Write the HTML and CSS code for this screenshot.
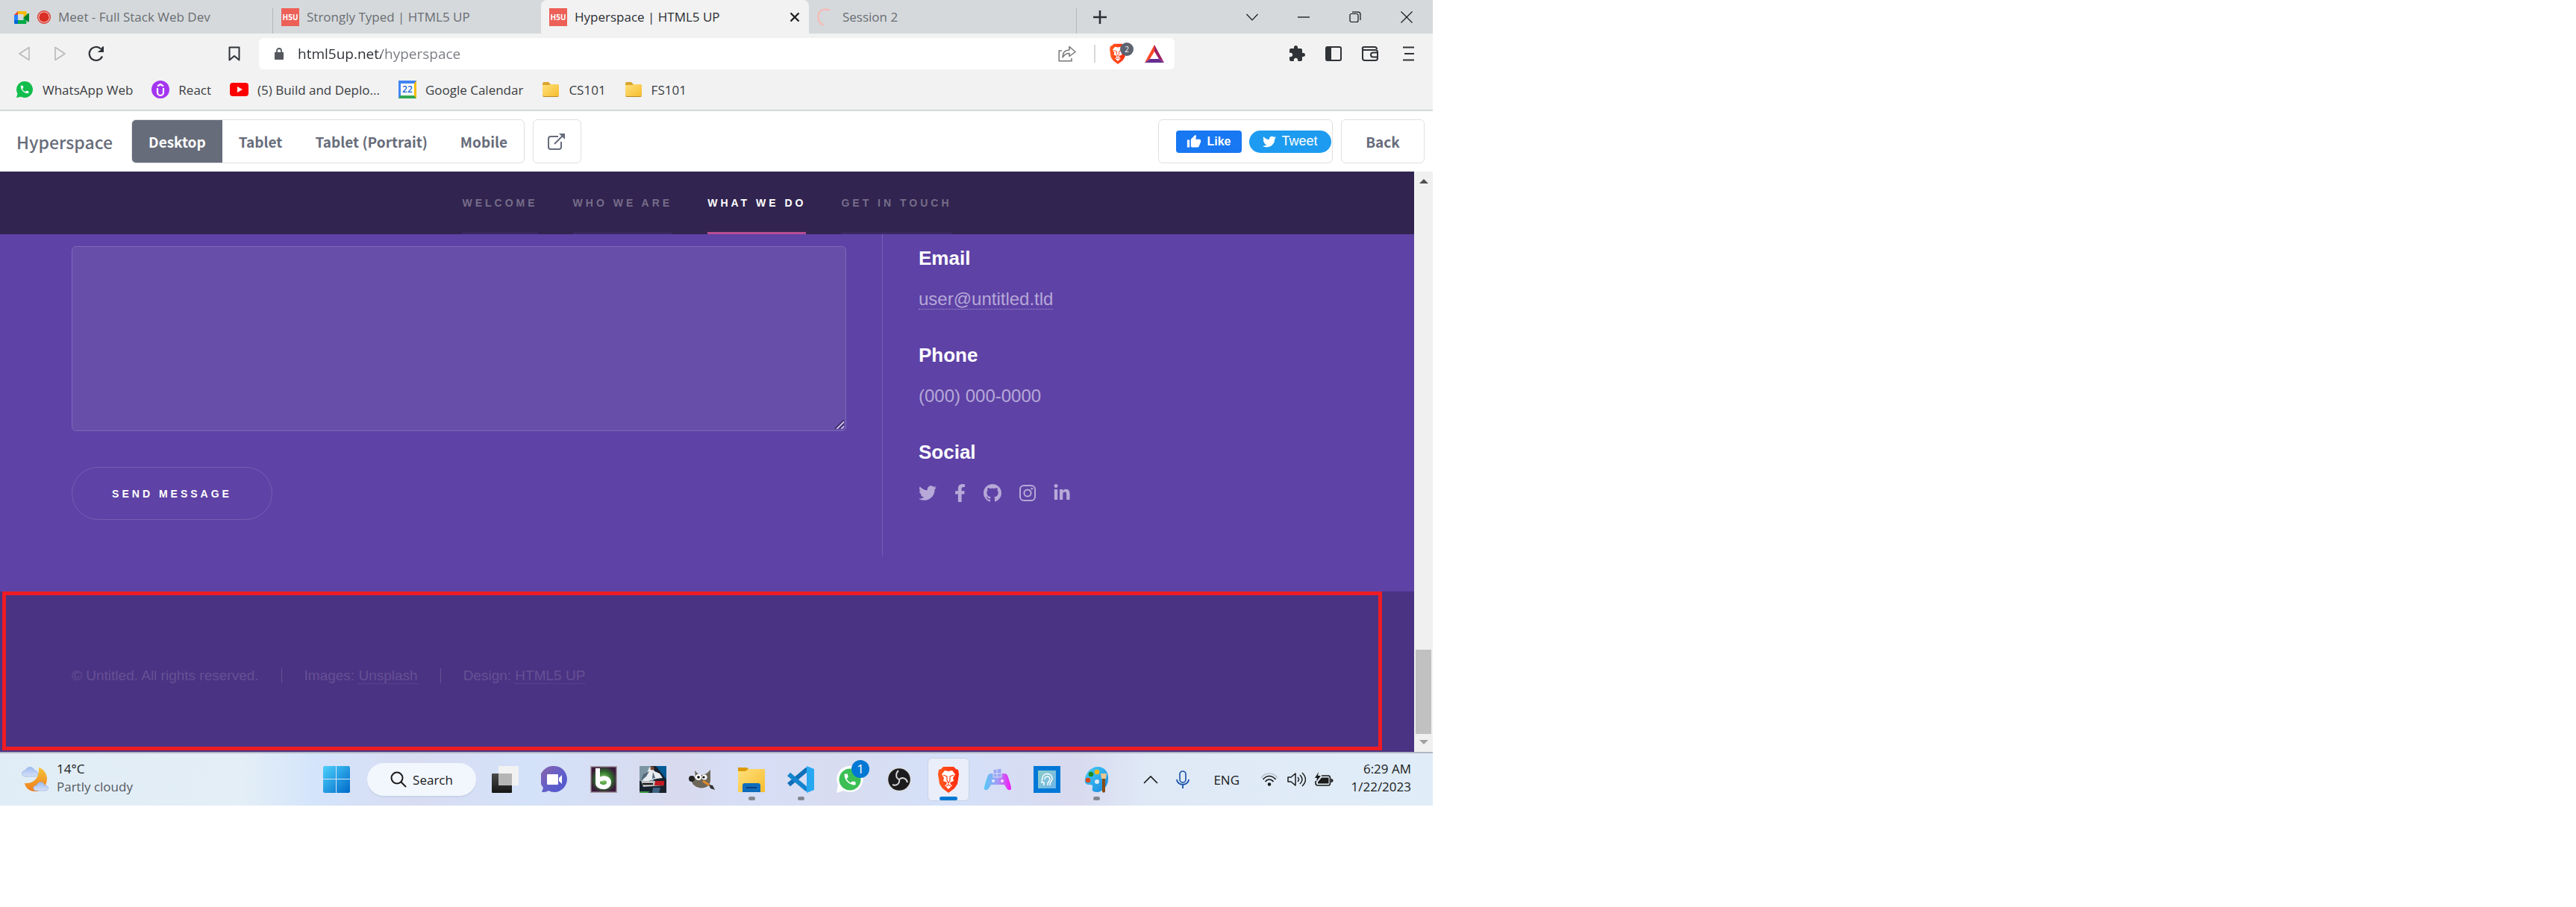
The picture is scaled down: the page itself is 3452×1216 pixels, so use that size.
FILE: index.html
```
<!DOCTYPE html>
<html lang="en">
<head>
<meta charset="utf-8">
<title>Hyperspace | HTML5 UP</title>
<link rel="stylesheet" href="styles.css">
</head>
<body>
<svg class="defs" aria-hidden="true">
  <defs>
    <linearGradient id="g-win" x1="0" y1="0" x2="1" y2="1"><stop offset="0" stop-color="#4cd0fb"/><stop offset="1" stop-color="#0069c9"/></linearGradient>
    <linearGradient id="g-folder" x1="0" y1="0" x2="1" y2="1"><stop offset="0" stop-color="#ffe07d"/><stop offset="1" stop-color="#f6bd2d"/></linearGradient>
    <linearGradient id="g-moon" x1="0" y1="0" x2="0" y2="1"><stop offset="0" stop-color="#f4c437"/><stop offset="1" stop-color="#f07c1e"/></linearGradient>
    <linearGradient id="g-cloud" x1="0" y1="0" x2="0" y2="1"><stop offset="0" stop-color="#9dbcf3"/><stop offset="1" stop-color="#d6e1f6"/></linearGradient>
    <linearGradient id="g-chat" x1="0" y1="0" x2="1" y2="1"><stop offset="0" stop-color="#8d63a8"/><stop offset=".5" stop-color="#6460c8"/><stop offset="1" stop-color="#4d56d0"/></linearGradient>
    <linearGradient id="g-brave" x1="0" y1="0" x2="1" y2="0"><stop offset="0" stop-color="#ff5a1f"/><stop offset="1" stop-color="#ff2a10"/></linearGradient>
    <linearGradient id="g-pad" x1="0" y1="0" x2="1" y2="0"><stop offset="0" stop-color="#55c8f8"/><stop offset=".5" stop-color="#a59bf5"/><stop offset="1" stop-color="#f616f6"/></linearGradient>
    <linearGradient id="g-palette" x1="0" y1="0" x2="1" y2="1"><stop offset="0" stop-color="#45d0f5"/><stop offset="1" stop-color="#1a86e0"/></linearGradient>
    <linearGradient id="g-head" x1="0" y1="0" x2="1" y2="1"><stop offset="0" stop-color="#8fcfc8"/><stop offset="1" stop-color="#6db3ea"/></linearGradient>
    <linearGradient id="g-dark" x1="0" y1="0" x2="0" y2="1"><stop offset="0" stop-color="#4a4a4a"/><stop offset="1" stop-color="#151515"/></linearGradient>
    <radialGradient id="g-glow"><stop offset="0" stop-color="#8fe070"/><stop offset=".6" stop-color="#2f6d2c"/><stop offset="1" stop-color="#3b1a3a"/></radialGradient>
  </defs>
  <symbol id="lion" viewBox="0 0 30 36">
    <path fill="url(#g-brave)" d="M8 1h14l3 3 3 1 1 6-2 13-4 6-8 6-8-6-4-6L1 11l1-6 3-1z"/>
    <path fill="#fff" d="M15 7l5-1 4 5-3 5 1 4-5 2 1 3 2 1-5 5-5-5 2-1 1-3-5-2 1-4-3-5 4-5z"/>
    <path fill="none" stroke="#ff3d15" stroke-width="1.2" d="M8 12l5 2v5l2 4 2-4v-5l5-2M12 27l3-2 3 2"/>
  </symbol>
  <symbol id="bird" viewBox="0 0 512 512"><path fill="currentColor" d="M459.37 151.716c.325 4.548.325 9.097.325 13.645 0 138.72-105.583 298.558-298.558 298.558-59.452 0-114.68-17.219-161.137-47.106 8.447.974 16.568 1.299 25.34 1.299 49.055 0 94.213-16.568 130.274-44.832-46.132-.975-84.792-31.188-98.112-72.772 6.498.974 12.995 1.624 19.818 1.624 9.421 0 18.843-1.3 27.614-3.573-48.081-9.747-84.143-51.98-84.143-102.985v-1.299c13.969 7.797 30.214 12.67 47.431 13.319-28.264-18.843-46.781-51.005-46.781-87.391 0-19.492 5.197-37.36 14.294-52.954 51.655 63.675 129.3 105.258 216.365 109.807-1.624-7.797-2.599-15.918-2.599-24.04 0-57.828 46.782-104.934 104.934-104.934 30.213 0 57.502 12.67 76.67 33.137 23.715-4.548 46.456-13.32 66.599-25.34-7.798 24.366-24.366 44.833-46.132 57.827 21.117-2.273 41.584-8.122 60.426-16.243-14.292 20.791-32.161 39.308-52.628 54.253z"/></symbol>
  <symbol id="call" viewBox="0 0 24 24"><path fill="#fff" d="M6.62 10.79c1.44 2.83 3.76 5.14 6.59 6.59l2.2-2.2c.27-.27.67-.36 1.02-.24 1.12.37 2.33.57 3.57.57.55 0 1 .45 1 1V20c0 .55-.45 1-1 1-9.39 0-17-7.61-17-17 0-.55.45-1 1-1h3.5c.55 0 1 .45 1 1 0 1.25.2 2.45.57 3.57.11.35.03.74-.25 1.02l-2.2 2.2z"/></symbol>
  <symbol id="folder" viewBox="0 0 24 24"><path fill="#d9a52b" d="M1 4c0-1 1-2 2-2h6l3 3h9c1 0 2 1 2 2v12H1z"/><path fill="url(#g-folder)" d="M1 6h9l2-1h9c1 0 2 1 2 2v12c0 1-1 2-2 2H3c-1 0-2-1-2-2z"/><path fill="#b88a24" d="M1 19c0 1 1 2 2 2h18c1 0 2-1 2-2v1c0 1-1 2-2 2H3c-1 0-2-1-2-2z"/></symbol>
</svg>

<div class="desktop">
  <header class="chrome">
    <div class="tabs">
      <div class="tab">
        <svg width="22" height="22" viewBox="0 0 22 22"><path fill="#fbbc04" d="M6 3h10c1 0 1.500 .5 1.500 1.500V9l-4 3V7H6z"/><path fill="#ea4335" d="M6 3v5H1z"/><path fill="#2684fc" d="M1 8h5v7H1z"/><path fill="#0066da" d="M1 15h5v5H2.500C1.500 20 1 19.500 1 18.500z"/><path fill="#00ac47" d="M6 15h7.500v-4l4 3v4.500c0 1-.5 1.500-1.500 1.500H6z"/><path fill="#00832d" d="M13.500 11.500l6-5.500c.7-.6 1.500-.2 1.500.6v10c0 .8-.8 1.200-1.500.6z"/></svg>
        <svg width="18" height="22" viewBox="0 0 18 22"><circle cx="9" cy="11" r="8.300" fill="#fff" stroke="#d93025" stroke-width="1.400"/><circle cx="9" cy="11" r="6.800" fill="#d93025"/></svg>
        <span>Meet - Full Stack Web Dev</span>
      </div>
      <div class="tab tab-plain"><span class="h5u">H5U</span><span>Strongly Typed | HTML5 UP</span></div>
      <div class="tab tab-active"><span class="h5u">H5U</span><span class="tab-name">Hyperspace | HTML5 UP</span>
        <button class="bare" aria-label="Close tab"><svg width="14" height="14" viewBox="0 0 14 14"><path stroke="#222" stroke-width="2.400" d="M1.500 1.500l11 11m0-11l-11 11"/></svg></button></div>
      <div class="tab"><svg width="24" height="24" viewBox="0 0 24 24"><path fill="none" stroke="#f4bcb8" stroke-width="2.500" d="M17 3C8-1 1 4 1.500 12c0 5 3 9 7 10.500"/></svg><span>Session 2</span></div>
      <button class="bare new-tab" aria-label="New tab"><svg width="18" height="18" viewBox="0 0 18 18"><path stroke="#2b2e33" stroke-width="2.500" d="M9 0v18M0 9h18"/></svg></button>
      <div class="window-buttons">
        <button class="bare" aria-label="Search tabs"><svg width="16" height="16" viewBox="0 0 16 16"><path fill="none" stroke="#111" stroke-width="1.100" d="M.5 4L8 12l7.500-8"/></svg></button>
        <button class="bare" aria-label="Minimize"><svg width="16" height="16" viewBox="0 0 16 16"><path stroke="#111" stroke-width="1.300" d="M0 8h16"/></svg></button>
        <button class="bare" aria-label="Restore"><svg width="16" height="16" viewBox="0 0 16 16"><rect x="1" y="3.500" width="11" height="11" rx="2" fill="none" stroke="#111" stroke-width="1.200"/><path fill="none" stroke="#111" stroke-width="1.200" d="M4 1.200h8c2 0 3 1 3 3V12"/></svg></button>
        <button class="bare" aria-label="Close"><svg width="16" height="16" viewBox="0 0 16 16"><path stroke="#111" stroke-width="1.100" d="M.5 .5l15 15m0-15l-15 15"/></svg></button>
      </div>
    </div>

    <div class="toolbar">
      <div class="history">
        <button class="bare" aria-label="Back"><svg width="18" height="20" viewBox="0 0 18 20"><path fill="none" stroke="#b9b9b9" stroke-width="1.600" stroke-linejoin="round" d="M15 1.500v17L2 10z"/></svg></button>
        <button class="bare" aria-label="Forward"><svg width="18" height="20" viewBox="0 0 18 20"><path fill="none" stroke="#b9b9b9" stroke-width="1.600" stroke-linejoin="round" d="M3 1.500v17L16 10z"/></svg></button>
        <button class="bare" aria-label="Reload"><svg width="22" height="22" viewBox="0 0 22 22"><path fill="none" stroke="#2f3237" stroke-width="2.200" d="M19 14.500A9 9 0 1 1 17 4.500"/><path fill="#2f3237" d="M21 1v8h-8c1-2 4-2 4-4 0-1 2-4 4-4z"/></svg></button>
        <button class="bare bookmark" aria-label="Bookmark this page"><svg width="16" height="20" viewBox="0 0 16 20"><path fill="none" stroke="#2f3237" stroke-width="2" stroke-linejoin="round" d="M1.500 1.500h13v17L8 13l-6.500 5.500z"/></svg></button>
      </div>
      <div class="address">
        <svg width="14" height="16" viewBox="0 0 14 16"><path fill="#55585d" d="M1 6h12v9c0 .6-.4 1-1 1H2c-.6 0-1-.4-1-1z"/><path fill="none" stroke="#55585d" stroke-width="1.800" d="M4 6.500V4a3 3 0 0 1 6 0v2.500"/></svg>
        <input class="url" type="text" aria-label="Address" value="html5up.net/hyperspace">
        <svg width="24" height="22" viewBox="0 0 24 22"><path fill="none" stroke="#777" stroke-width="1.500" d="M5 7H1.200v13.800H18V17"/><path fill="none" stroke="#777" stroke-width="1.500" stroke-linejoin="round" d="M6 16c0-6 3-10 9-10V1.500L23 8.500l-8 6V10.500c-4 0-7 2-9 5.500z"/></svg>
        <span class="rule"></span>
        <span class="shield"><svg width="24" height="28"><use href="#lion"/></svg><span class="shield-count">2</span></span>
        <svg width="26" height="24" viewBox="0 0 26 24"><path fill="#ff4724" d="M13 0v9L7 19 0 24z"/><path fill="#9e1f63" d="M13 0l13 24-7-5-6-10z"/><path fill="#662d91" d="M0 24l7-5h12l7 5z"/></svg>
      </div>
      <div class="actions">
        <button class="bare" aria-label="Extensions"><svg width="24" height="24" viewBox="0 0 24 24"><path fill="#2f3237" d="M20.500 11H19V7c0-1.100-.9-2-2-2h-4V3.500C13 2.120 11.880 1 10.500 1S8 2.120 8 3.500V5H4c-1.100 0-1.990.9-1.990 2v3.800H3.500c1.490 0 2.700 1.210 2.700 2.700s-1.210 2.700-2.700 2.700H2V20c0 1.100.9 2 2 2h3.800v-1.500c0-1.490 1.210-2.700 2.700-2.700 1.490 0 2.700 1.210 2.700 2.700V22H17c1.100 0 2-.9 2-2v-4h1.500c1.380 0 2.500-1.120 2.500-2.500S21.880 11 20.500 11z"/></svg></button>
        <button class="bare" aria-label="Sidebar"><svg width="22" height="20" viewBox="0 0 22 20"><rect x="1" y="1" width="20" height="18" rx="2" fill="none" stroke="#2f3237" stroke-width="2"/><path fill="#2f3237" d="M2 2h6v16H2z"/></svg></button>
        <button class="bare" aria-label="Wallet"><svg width="24" height="20" viewBox="0 0 24 20"><path fill="none" stroke="#2f3237" stroke-width="2" d="M2 3v13c0 1.500 1 3 3 3h14c2 0 3-1 3-3V8c0-2-1-3-3-3H4C1 5 1 1 4 1h14c2 0 3 1 3 3M22 8.500h-6c-4 0-4 6 0 6h6"/></svg></button>
        <button class="bare menu" aria-label="Menu"><svg width="16" height="20" viewBox="0 0 16 20"><path stroke="#2f3237" stroke-width="2" d="M0 1.500h15M2 10h13M0 18.500h15"/></svg></button>
      </div>
    </div>

    <nav class="bookmarks" aria-label="Bookmarks">
      <a href="#"><svg width="24" height="24" viewBox="0 0 24 24"><path fill="#12bd4c" d="M12 1a11 11 0 1 1-5 20.800L1 23l1.500-5.500A11 11 0 0 1 12 1z"/><use href="#call" x="5" y="5" width="14" height="14"/></svg>WhatsApp Web</a>
      <a href="#"><svg width="24" height="24" viewBox="0 0 24 24"><circle cx="12" cy="12" r="12" fill="#a435f0"/><path fill="none" stroke="#fff" stroke-width="2.200" d="M8 10v6a4 4 0 0 0 8 0v-6M8 7.500L12 5l4 2.500"/></svg>React</a>
      <a href="#"><svg width="25" height="18" viewBox="0 0 25 18"><rect width="25" height="18" rx="4" fill="#f00"/><path fill="#fff" d="M10 5l7 4-7 4z"/></svg>(5) Build and Deplo...</a>
      <a href="#"><span class="calendar">22</span>Google Calendar</a>
      <a href="#"><svg width="24" height="24"><use href="#folder"/></svg>CS101</a>
      <a href="#"><svg width="24" height="24"><use href="#folder"/></svg>FS101</a>
    </nav>
  </header>

  <section class="preview-bar">
    <h1>Hyperspace</h1>
    <div class="sizes">
      <button class="size size-active">Desktop</button>
      <button class="size">Tablet</button>
      <button class="size">Tablet (Portrait)</button>
      <button class="size">Mobile</button>
    </div>
    <button class="boxed open" aria-label="Open in new window"><svg width="24" height="22" viewBox="0 0 24 22"><path fill="none" stroke="#666c7a" stroke-width="2" d="M14 4H4C2 4 1 5 1 7v11c0 2 1 3 3 3h11c2 0 3-1 3-3v-7M9 14L21 2"/><path fill="#666c7a" d="M15 0h8v8z"/></svg></button>
    <div class="boxed share">
      <button class="like"><svg width="20" height="20" viewBox="0 0 24 24"><path fill="#fff" d="M1 21h4V9H1v12zm22-11c0-1.100-.9-2-2-2h-6.310l.95-4.570.03-.32c0-.41-.17-.79-.44-1.060L14.170 1 7.590 7.590C7.220 7.950 7 8.450 7 9v10c0 1.100.9 2 2 2h9c.83 0 1.540-.5 1.840-1.220l3.020-7.050c.09-.23.14-.47.14-.73v-2z"/></svg>Like</button>
      <button class="tweet"><svg width="18" height="18"><use href="#bird"/></svg>Tweet</button>
    </div>
    <button class="boxed back">Back</button>
  </section>

  <div class="viewport">
    <div class="page">
      <nav class="site-nav">
        <a href="#">Welcome</a><a href="#">Who we are</a><a href="#" class="current">What we do</a><a href="#">Get in touch</a>
      </nav>
      <main class="contact">
        <form class="message">
          <div class="field">
            <textarea aria-label="Message"></textarea>
            <svg class="grip" width="12" height="12" viewBox="0 0 12 12"><path stroke="#d3cae9" stroke-width="2" d="M2 12L12 2M8 12l4-4"/><path stroke="#2c1c50" stroke-width="1.300" d="M0 12L12 0M6 12l6-6"/></svg>
          </div>
          <button type="button" class="send">Send Message</button>
        </form>
        <section class="details">
          <div><h3>Email</h3><a href="#">user@untitled.tld</a></div>
          <div><h3>Phone</h3><span>(000) 000-0000</span></div>
          <div><h3>Social</h3>
            <div class="social">
              <svg width="24" height="24"><use href="#bird"/></svg>
              <svg width="15" height="24" viewBox="0 0 320 512"><path fill="currentColor" d="M279.140 288l14.220-92.660h-88.910v-60.130c0-25.350 12.420-50.060 52.240-50.060h40.420V6.260S260.430 0 225.360 0c-73.220 0-121.080 44.380-121.080 124.720v70.620H22.890V288h81.390v224h100.170V288z"/></svg>
              <svg width="24" height="24" viewBox="0 0 16 16"><path fill="currentColor" d="M8 0C3.580 0 0 3.580 0 8c0 3.540 2.290 6.530 5.470 7.590.4.07.55-.17.55-.38 0-.19-.01-.82-.01-1.490-2.010.37-2.530-.49-2.690-.94-.09-.23-.48-.94-.82-1.130-.28-.15-.68-.52-.01-.53.63-.01 1.080.58 1.230.82.72 1.210 1.870.87 2.330.66.07-.52.28-.87.51-1.070-1.780-.2-3.640-.89-3.640-3.950 0-.87.31-1.590.82-2.150-.08-.2-.36-1.020.08-2.120 0 0 .67-.21 2.200.82.64-.18 1.320-.27 2-.27.68 0 1.360.09 2 .27 1.530-1.040 2.200-.82 2.200-.82.44 1.100.16 1.920.08 2.120.51.56.82 1.270.82 2.150 0 3.070-1.870 3.750-3.650 3.950.29.25.54.73.54 1.480 0 1.070-.01 1.930-.01 2.200 0 .21.15.46.55.38A8.013 8.013 0 0016 8c0-4.420-3.580-8-8-8z"/></svg>
              <svg width="22" height="22" viewBox="0 0 22 22"><rect x="1" y="1" width="20" height="20" rx="5" fill="none" stroke="currentColor" stroke-width="2"/><circle cx="11" cy="11" r="4.600" fill="none" stroke="currentColor" stroke-width="2"/><circle cx="16.800" cy="5.200" r="1.400" fill="currentColor"/></svg>
              <svg width="22" height="24" viewBox="0 0 448 512"><path fill="currentColor" d="M100.280 448H7.400V148.900h92.880zM53.790 108.100C24.090 108.100 0 83.500 0 53.800a53.790 53.790 0 0 1 107.580 0c0 29.700-24.100 54.300-53.790 54.300zM447.900 448h-92.680V302.400c0-34.700-.7-79.200-48.290-79.200-48.290 0-55.690 37.700-55.690 76.700V448h-92.780V148.900h89.080v40.800h1.300c12.400-23.500 42.690-48.300 87.880-48.300 94 0 111.280 61.900 111.280 142.300V448z"/></svg>
            </div>
          </div>
        </section>
      </main>
      <footer class="site-footer">
        <ul>
          <li>© Untitled. All rights reserved.</li>
          <li>Images: <a href="#">Unsplash</a></li>
          <li>Design: <a href="#">HTML5 UP</a></li>
        </ul>
        <div class="marker"></div>
      </footer>
    </div>
    <div class="scrollbar"><span class="arrow-up"></span><span class="thumb"></span><span class="arrow-down"></span></div>
  </div>

  <footer class="taskbar">
    <div class="weather">
      <svg width="37" height="36" viewBox="0 0 37 36"><path fill="url(#g-moon)" d="M23 2c7 2 11 9 11 15 0 10-7 17-16 17C10 34 5 29 4 23c10 1 20-5 19-21z"/><path fill="url(#g-cloud)" stroke="#8fa8e0" stroke-width=".6" d="M4 14c-5-1-4-8 1-8 2-6 11-6 12 0 6 0 6 8 1 8z"/><path fill="url(#g-cloud)" stroke="#8fa8e0" stroke-width=".6" d="M19 33c-5-1-4-7 1-7 2-6 9-6 11 0 6 0 6 7 1 7z"/></svg>
      <p>14°C<span>Partly cloudy</span></p>
    </div>
    <div class="apps">
      <button class="app" aria-label="Start"><svg width="36" height="36" viewBox="0 0 36 36"><path fill="url(#g-win)" d="M2 0h15v17H0V2c0-1 1-2 2-2zM18 0h16c1 0 2 1 2 2v15H18zM0 18h17v18H2c-1 0-2-1-2-2zM18 18h18v16c0 1-1 2-2 2H18z"/></svg></button>
      <button class="search"><svg width="22" height="22" viewBox="0 0 22 22"><circle cx="9" cy="9" r="7.500" fill="none" stroke="#1a1a1a" stroke-width="2"/><path stroke="#1a1a1a" stroke-width="2" d="M14 14l7 7"/></svg>Search</button>
      <button class="app" aria-label="Task view"><svg width="36" height="36" viewBox="0 0 36 36"><rect y="10" width="27" height="26" rx="1" fill="url(#g-dark)"/><rect x="9" width="27" height="26" rx="1" fill="#f2f2f2"/><path fill="#b5b5b5" d="M9 10h18v16H9z"/></svg></button>
      <button class="app" aria-label="Chat"><svg width="36" height="36" viewBox="0 0 36 36"><path fill="url(#g-chat)" d="M18 0a17 17.500 0 1 1-8 33c-3 2-6 2-9 2l2-6A17.500 17.500 0 0 1 18 0z"/><rect x="8" y="11" width="15" height="14" rx="1" fill="#fff"/><path fill="#fff" d="M24 16l4-4v12l-4-4z"/></svg></button>
      <button class="app" aria-label="Bandicam"><svg width="36" height="36" viewBox="0 0 36 36"><rect width="36" height="36" fill="url(#g-glow)"/><rect x=".75" y=".75" width="34.500" height="34.500" fill="none" stroke="#aaa0a8" stroke-width="1.500"/><path fill="none" stroke="#fff" stroke-width="6" d="M10 3v20c0 6 15 8 15-1 0-7-9-7-13-3"/></svg></button>
      <button class="app" aria-label="PES 2013"><svg width="36" height="36" viewBox="0 0 36 36"><rect width="36" height="36" fill="#16222d"/><path fill="#7d96a3" d="M0 0h15l4 20H0z"/><path fill="#045b96" d="M22 0h14v18z"/><path fill="#e8edf0" d="M13 2l4-1 3 6 7 3 4 6-8 1-9 2-7 4-4-2 5-7z"/><path fill="#51697a" d="M5 11l8-4-4 7-7 5zM18 8l3 8-4 1z"/><circle cx="17" cy="3" r="2.500" fill="#7b4a33"/><path fill="#bcbcbc" d="M2 20h31v6L5 28z"/><path fill="#c21822" d="M21 20h12v6H20z"/><path stroke="#111" stroke-width="2" d="M4 24h14"/><path fill="#3b9d43" d="M0 34h14l-3 2H0z"/><path fill="#3f6282" d="M18 29h10l-2 7h-9z"/></svg></button>
      <button class="app" aria-label="GIMP"><svg width="36" height="36" viewBox="0 0 36 36"><path fill="#6d675a" d="M8 6l6 6c5 1 10-1 15-7v14c0 8-8 12-15 10-5-1-9-4-10-8l5-5z"/><circle cx="13" cy="15" r="4" fill="#fff"/><circle cx="21" cy="15" r="3.500" fill="#fff"/><circle cx="13" cy="15" r="1.800"/><circle cx="20" cy="15" r="1.600"/><circle cx="4" cy="17" r="4" fill="#222"/><path stroke="#e28a2b" stroke-width="3" d="M19 20l9 6"/><path fill="#333" d="M27 25l5 1 3 6-6-2z"/></svg></button>
      <button class="app running" aria-label="File Explorer"><svg width="36" height="36" viewBox="0 0 36 36"><path fill="#dd9b0b" d="M0 2h12l3 3v6H0z"/><path fill="url(#g-folder)" d="M0 7h10l4-3h22v31H0z"/><path fill="#0f6cbd" d="M6 35V26c0-2 1-3 3-3h18c2 0 3 1 3 3v9z"/><path stroke="#0a3e78" stroke-width="2" d="M11 29h14"/></svg></button>
      <button class="app running" aria-label="Visual Studio Code"><svg width="36" height="36" viewBox="0 0 36 36"><path fill="none" stroke="#0f70b8" stroke-width="6" d="M2 25L27 4"/><path fill="none" stroke="#1484cf" stroke-width="6" d="M2 11l25 21"/><path fill="#29a8f2" d="M26 0l10 4v28l-10 4z"/></svg></button>
      <button class="app" aria-label="WhatsApp"><svg width="36" height="36" viewBox="0 0 36 36"><path fill="#fff" d="M18 0a17.500 17.500 0 1 1-8 33L0 36l2-11A17.500 17.500 0 0 1 18 0z"/><circle cx="18" cy="18" r="14.500" fill="#3bbf55"/><use href="#call" x="8" y="8" width="20" height="20"/></svg><span class="count">1</span></button>
      <button class="app" aria-label="OBS"><svg width="36" height="36" viewBox="0 0 36 36"><circle cx="18" cy="18" r="15.500" fill="#1c1c1f" stroke="#ddd" stroke-width="1.500"/><path fill="none" stroke="#d5d5d5" stroke-width="2" d="M18 18c-5-2-5-8-1-12M18 18c5-4 10-1 11 4M18 18c1 6-4 9-9 7"/></svg></button>
      <button class="app app-active" aria-label="Brave"><svg width="30" height="36"><use href="#lion"/></svg></button>
      <button class="app" aria-label="Game controller"><svg width="36" height="36" viewBox="0 0 36 36"><path fill="url(#g-pad)" d="M4 15c1-4 3-5 6-5h16c3 0 5 1 6 5 2 6 4 12 4 15 0 3-4 3-6 0l-3-5H9l-3 5c-2 3-6 3-6 0 0-3 2-9 4-15z"/><path fill="#9aa6f6" stroke="#d8def3" d="M12 5l11-2v12H12zM17 4v11M12 10h11"/><circle cx="12" cy="20" r="2" fill="#e6ecff"/><circle cx="24" cy="20" r="2" fill="#ffe1ff"/></svg></button>
      <button class="app" aria-label="Assistant"><svg width="36" height="36" viewBox="0 0 36 36"><rect width="36" height="36" fill="#0078d7"/><rect x="6" y="6" width="24" height="24" fill="url(#g-head)"/><path fill="none" stroke="#fff" stroke-width="1.400" d="M14 26v-4h-3l1-6c1-8 13-7 13 1 0 3-2 4-3 6v3M15 18a3.500 3.500 0 1 1 6 2l-2 3v3"/></svg></button>
      <button class="app running" aria-label="Paint"><svg width="36" height="36" viewBox="0 0 36 36"><path fill="url(#g-palette)" d="M20 1c10 0 15 8 14 17 0 9-8 17-15 17-6 0-7-3-6-6 1-4-2-4-5-4-5 0-6-4-5-8C4 9 11 1 20 1z"/><circle cx="19" cy="8" r="3.300" fill="#f7b90c"/><circle cx="11" cy="11" r="3.300" fill="#1d8a20"/><circle cx="7" cy="19" r="3.300" fill="#d9481c"/><circle cx="19" cy="21" r="3" fill="#d9e9f8"/><path fill="#8a4b12" d="M26 16h4v18c0 2-4 2-4 0z"/><path fill="#e7c795" d="M24 10h8l-1 7h-6z"/></svg></button>
    </div>
    <div class="tray">
      <svg width="20" height="12" viewBox="0 0 20 12"><path fill="none" stroke="#1a1a1a" stroke-width="1.600" d="M1 11l9-9 9 9"/></svg>
      <svg width="18" height="24" viewBox="0 0 18 24"><rect x="5" y="1" width="8" height="15" rx="4" fill="none" stroke="#1650a8" stroke-width="1.600"/><path fill="none" stroke="#1650a8" stroke-width="1.800" d="M1 12c0 9 16 9 16 0M9 19v5"/></svg>
      <span class="lang">ENG</span>
      <div class="status">
        <svg width="24" height="18" viewBox="0 0 24 18"><path fill="none" stroke="#b9c2cc" stroke-width="1.600" d="M1 7C7-1 17-1 23 7"/><path fill="none" stroke="#1a1a1a" stroke-width="1.700" d="M3.500 9c5-6 12-6 17 0M6.500 12c3-4 8-4 11 0"/><circle cx="12" cy="15.500" r="2.200" fill="#1a1a1a"/></svg>
        <svg width="25" height="20" viewBox="0 0 25 20"><path fill="none" stroke="#1a1a1a" stroke-width="1.500" stroke-linejoin="round" d="M1 7h4l6-5v16l-6-5H1zM14 7c2 2 2 4 0 6M17 4c4 4 4 8 0 12M20 1c6 6 6 12 0 18"/></svg>
        <svg width="25" height="20" viewBox="0 0 25 20"><path fill="none" stroke="#1a1a1a" stroke-width="1.600" d="M9 5h9c2 0 2.500 1 2.500 3v7c0 2-1 3-2.500 3h-14c-2 0-3-1-3-3v-3"/><path fill="#1a1a1a" d="M9 7.500h9.500v8H4v-2zM21.500 9c4 0 4 5 0 5zM5 0L0 8h3l-1 5 6-8H4z"/></svg>
      </div>
      <p class="clock">6:29 AM<br>1/22/2023</p>
    </div>
  </footer>
</div>
</body>
</html>
```
FILE: styles.css
```
* { box-sizing: border-box; }

body {
  margin: 0;
  background: #fff;
  font-family: "Open Sans", "Noto Sans", sans-serif;
  font-size: 17px;
  color: #3a3d42;
}

h1, h3, p, ul { margin: 0; padding: 0; font-weight: inherit; }
button, input, textarea { font: inherit; color: inherit; }
a { color: inherit; text-decoration: none; }
svg { display: block; flex: none; }
.defs { position: absolute; width: 0; height: 0; }

.desktop { max-width: 1920px; }

.bare {
  display: flex;
  padding: 0;
  border: 0;
  background: none;
}

/* Browser chrome */
.chrome { background: #f2f2f2; border-bottom: 2px solid #d5d9dc; }

.tabs {
  display: flex;
  height: 45px;
  padding-left: 7px;
  background: #d5d9dc;
}

.tab {
  display: flex;
  align-items: center;
  flex: 0 1 359px;
  gap: 10px;
  padding-left: 11px;
  color: #6a6d72;
  white-space: nowrap;
  background: linear-gradient(#b4b8bc, #b4b8bc) right bottom / 1px 34px no-repeat;
}

.tab-plain { background: none; }

.tab-active {
  padding-right: 12px;
  color: #2b2e33;
  background: #f2f2f2;
  border-radius: 8px 8px 0 0;
}

.tab-name { flex: 1; }

.h5u {
  width: 24px;
  flex: none;
  background: #ec6057;
  color: #fff;
  font: bold 10px/24px "Open Sans", sans-serif;
  text-align: center;
}

.new-tab { align-items: center; margin-left: 22px; }

.window-buttons {
  display: flex;
  align-items: center;
  gap: 53px;
  margin-left: auto;
  padding-right: 27px;
}

.toolbar {
  display: flex;
  align-items: center;
  height: 54px;
}

.history {
  display: flex;
  align-items: center;
  gap: 29px;
  width: 347px;
  padding: 0 25px 0 24px;
}

.bookmark { margin-left: auto; }

.address {
  display: flex;
  align-items: center;
  flex: 0 1 1227px;
  gap: 18px;
  height: 42px;
  padding: 0 14px 0 20px;
  border-radius: 6px;
  background: #fff;
}

.url {
  flex: 1;
  min-width: 0;
  padding: 0;
  border: 0;
  outline: 0;
  font-size: 19px;
  color: #4a4d52;
  background: linear-gradient(90deg, #2b2e33 112px, #777a7f 112px);
  background-clip: text;
  -webkit-text-fill-color: transparent;
}

.rule { width: 2px; height: 24px; margin-left: 6px; background: #d8d8d8; }
.shield { position: relative; margin-right: 6px; }

.shield-count {
  position: absolute;
  top: -1px;
  left: 15px;
  width: 18px;
  border-radius: 9px;
  background: #5e6370;
  color: #fff;
  font-size: 10px;
  line-height: 18px;
  text-align: center;
}

.actions {
  display: flex;
  align-items: center;
  gap: 26px;
  margin-left: auto;
  padding-right: 24px;
}

.menu { margin-left: 6px; }

.bookmarks {
  display: flex;
  align-items: center;
  gap: 25px;
  height: 48px;
  padding: 0 21px 6px;
}

.bookmarks a { display: flex; align-items: center; gap: 12px; }

.calendar {
  width: 24px;
  height: 24px;
  border: solid #4285f4;
  border-width: 4px 3px;
  border-right-color: #fbbc04;
  border-bottom-color: #34a853;
  background: #fff;
  color: #1967d2;
  font-size: 12px;
  font-weight: 600;
  line-height: 16px;
  text-align: center;
}

/* Preview bar */
.preview-bar {
  display: flex;
  align-items: center;
  gap: 11px;
  height: 81px;
  padding: 0 11px 0 22px;
  font-family: "Noto Sans CJK SC", sans-serif;
  font-size: 19px;
  font-weight: 500;
  color: #666c7a;
}

.preview-bar h1 { margin-right: 14px; font-size: 23px; }

.sizes, .boxed {
  display: flex;
  align-items: center;
  height: 59px;
  border: 1px solid #dfe0e3;
  border-radius: 6px;
  background: #fff;
  overflow: hidden;
}

.size {
  align-self: stretch;
  padding: 0 22px;
  border: 0;
  background: none;
  font-weight: 700;
}

.size-active { background: #666c7a; color: #fff; }
.open { justify-content: center; width: 65px; }
.back { justify-content: center; width: 112px; font-weight: 700; }
.share { gap: 10px; width: 234px; margin-left: auto; padding-left: 23px; }

.like, .tweet {
  display: flex;
  align-items: center;
  justify-content: center;
  gap: 7px;
  flex: none;
  width: 88px;
  height: 30px;
  padding: 0;
  border: 0;
  border-radius: 4px;
  background: #1877f2;
  color: #fff;
  font: bold 16px "Liberation Sans", sans-serif;
}

.tweet { width: 110px; border-radius: 15px; background: #1d9bf0; font-weight: 500; font-size: 18px; }

/* Previewed site */
.viewport { display: flex; }
.page { flex: 1; min-width: 0; background: #5e42a6; font-family: "Liberation Sans", sans-serif; }

.site-nav {
  display: flex;
  justify-content: center;
  gap: 47px;
  background: #312450;
  color: #766d89;
  font-size: 14px;
  font-weight: bold;
  letter-spacing: 4px;
  line-height: 77px;
  text-transform: uppercase;
}

.site-nav a { padding-top: 4px; border-bottom: 3px solid #3a2961; }
.site-nav .current { color: #fff; border-color: #b74e91; }

.contact {
  display: flex;
  padding: 0 96px 48px;
}

.message {
  flex: 0 1 1087px;
  padding: 16px 48px 48px 0;
  border-right: 1px solid #765eb3;
}

.field { position: relative; }

.message textarea {
  display: block;
  width: 100%;
  height: 248px;
  border: 1px solid #7e68b7;
  border-radius: 6px;
  background: #664ea9;
  resize: none;
}

.grip { position: absolute; right: 3px; bottom: 3px; }

.send {
  width: 269px;
  height: 71px;
  margin-top: 48px;
  border: 1px solid #765eb3;
  border-radius: 36px;
  background: none;
  color: #fff;
  font-size: 14px;
  font-weight: bold;
  letter-spacing: 4px;
  text-transform: uppercase;
}

.details {
  display: flex;
  flex-direction: column;
  gap: 46px;
  padding: 17px 0 0 48px;
  color: #b6a9d7;
  font-size: 24px;
  line-height: 28px;
}

.details h3 { margin-bottom: 26px; color: #fff; font-size: 26px; font-weight: bold; line-height: 30px; }
.details h3 + a { border-bottom: 1px dotted #a493cf; }
.social { display: flex; align-items: center; gap: 24px; height: 28px; }

.site-footer {
  position: relative;
  height: 215px;
  padding: 103px 96px 0;
  background: #4a3382;
  color: #665095;
  font-size: 19px;
  line-height: 20px;
}

.site-footer ul { display: flex; list-style: none; }
.site-footer li + li { margin-left: 30px; padding-left: 30px; border-left: 1px solid #665095; }
.site-footer a { border-bottom: 1px dotted; }

.marker {
  position: absolute;
  inset: 0 43px 2px 3px;
  border: 5px solid #ed1c24;
}

.scrollbar {
  display: flex;
  flex-direction: column;
  align-items: center;
  width: 25px;
  padding: 10px 0;
  background: #f0f0f0;
}

.arrow-up, .arrow-down { border: 6px solid transparent; border-top-width: 0; border-bottom-color: #505050; }
.arrow-down { border-width: 6px 6px 0; border-top-color: #a0a0a0; }
.thumb { width: 21px; height: 113px; margin: auto 0 8px; background: #c1c1c1; }

/* Taskbar */
.taskbar {
  display: grid;
  grid-template-columns: 1fr auto 1fr;
  align-items: center;
  height: 72px;
  border-top: 2px solid #b0b6c4;
  background: linear-gradient(90deg, #e1edf6, #e3eef6 17%, #d4e4fb 22%, #d8dcf1 29%, #d4e2f9 37%, #d8daee 47%, #d6def6 52%, #d8dcf0 59%, #d4e1fa 66%, #d8daee 75%, #dfe9f6 80%, #e0edf8);
  color: #1a1a1a;
}

.weather { display: flex; align-items: center; gap: 10px; padding-left: 29px; line-height: 24px; }
.weather p { padding-bottom: 4px; }
.weather span { display: block; color: #55595e; }
.apps { display: flex; align-items: center; }

.app {
  position: relative;
  display: flex;
  align-items: center;
  justify-content: center;
  width: 66px;
  height: 70px;
  padding: 0;
  border: 0;
  background: none;
}

.running::after, .app-active::after {
  content: "";
  position: absolute;
  bottom: 7px;
  width: 9px;
  height: 5px;
  border-radius: 3px;
  background: #82868f;
}

.app-active::after { width: 24px; background: #0078d4; }

.app-active {
  width: 56px;
  height: 58px;
  margin: 0 5px;
  border: 1px solid #c9d2e6;
  border-radius: 6px;
  background: #e9eefa;
}

.app-active::after { bottom: 0; }

.count {
  position: absolute;
  top: 9px;
  right: 7px;
  width: 24px;
  border-radius: 12px;
  background: #0078d4;
  color: #fff;
  font-size: 17px;
  line-height: 24px;
}

.search {
  display: flex;
  align-items: center;
  justify-content: center;
  gap: 8px;
  width: 146px;
  height: 44px;
  margin: 0 6px 0 8px;
  border: 0;
  border-radius: 22px;
  background: #f2f6fd;
  box-shadow: 0 2px #c6d3e8;
}

.tray {
  display: flex;
  align-items: center;
  justify-content: flex-end;
  gap: 24px;
  padding-right: 29px;
}

.lang { margin-left: 8px; }
.status { display: flex; align-items: center; gap: 12px; margin: 0 -12px 0 4px; }
.clock { width: 92px; padding-bottom: 4px; line-height: 24px; text-align: right; white-space: nowrap; }
```
